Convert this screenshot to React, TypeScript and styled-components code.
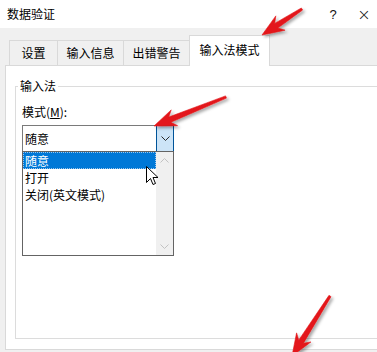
import React from "react";
import styled, { createGlobalStyle } from "styled-components";

const GlobalStyle = createGlobalStyle`
  html, body {
    margin: 0;
    padding: 0;
    background: #f0f0f0;
  }
  body {
    font-family: "Noto Sans CJK SC", "Microsoft YaHei", sans-serif;
    font-size: 12px;
    color: #000;
  }
`;

type Point = { x: number; y: number };

const ARROWS: { from: Point; to: Point }[] = [
  { from: { x: 302, y: 9 }, to: { x: 262, y: 35 } },
  { from: { x: 226, y: 97 }, to: { x: 154, y: 126 } },
  { from: { x: 330, y: 296 }, to: { x: 292, y: 356 } },
];

const TABS = [
  { label: "设置", width: 49 },
  { label: "输入信息", width: 67 },
  { label: "出错警告", width: 67 },
  { label: "输入法模式", width: 81 },
];
const OPTIONS = ["随意", "打开", "关闭(英文模式)"];

const arrowPoints = (from: Point, to: Point) => {
  const dx = to.x - from.x;
  const dy = to.y - from.y;
  const len = Math.hypot(dx, dy);
  const ux = dx / len;
  const uy = dy / len;
  const nx = -uy;
  const ny = ux;
  const head = 20;
  const half = 8.5;
  const bx = to.x - ux * head;
  const by = to.y - uy * head;
  const pts: [number, number][] = [
    [from.x + nx * 1.2, from.y + ny * 1.2],
    [bx + ux * 3 + nx * 2.8, by + uy * 3 + ny * 2.8],
    [bx - ux * 2 + nx * half, by - uy * 2 + ny * half],
    [to.x, to.y],
    [bx - ux * 2 - nx * half, by - uy * 2 - ny * half],
    [bx + ux * 3 - nx * 2.8, by + uy * 3 - ny * 2.8],
    [from.x - nx * 1.2, from.y - ny * 1.2],
  ];
  return pts.map((p) => p.join(",")).join(" ");
};

export default function App() {
  return (
    <>
      <GlobalStyle />
      <Window>
        <TitleBar>
          <Title>数据验证</Title>
          <HelpButton>?</HelpButton>
          <CloseButton>×</CloseButton>
        </TitleBar>

        <TabStrip>
          {TABS.map((t, i) => (
            <Tab key={t.label} $width={t.width} $active={i === TABS.length - 1}>
              {t.label}
            </Tab>
          ))}
        </TabStrip>

        <Panel>
          <GroupBox>
            <Legend>输入法</Legend>
            <FieldLabel>
              模式(<u>M</u>):
            </FieldLabel>
            <ComboWrap>
              <Combo>
                <ComboText>随意</ComboText>
                <DropButton>
                  <svg width="9" height="5" viewBox="0 0 9 5">
                    <path d="M0.5 0.5 L4.5 4.5 L8.5 0.5" fill="none" stroke="#2b2b2b" strokeWidth="1" />
                  </svg>
                </DropButton>
              </Combo>
              <DropList>
                <Options>
                  {OPTIONS.map((o, i) => (
                    <Option key={o} $selected={i === 0}>
                      {o}
                    </Option>
                  ))}
                </Options>
                <ScrollBar>
                  <ScrollArrow>
                    <svg width="9" height="5" viewBox="0 0 9 5">
                      <path d="M0.5 4.5 L4.5 0.5 L8.5 4.5" fill="none" stroke="#c2c2c2" strokeWidth="1" />
                    </svg>
                  </ScrollArrow>
                  <ScrollArrow>
                    <svg width="9" height="5" viewBox="0 0 9 5">
                      <path d="M0.5 0.5 L4.5 4.5 L8.5 0.5" fill="none" stroke="#c2c2c2" strokeWidth="1" />
                    </svg>
                  </ScrollArrow>
                </ScrollBar>
              </DropList>
            </ComboWrap>
          </GroupBox>
        </Panel>

        <Cursor width="13" height="20" viewBox="0 0 13 20">
          <path
            d="M0.5 0.5 L0.5 16.5 L4.5 12.5 L7 18.5 L9.5 17.5 L7 11.5 L12 11.5 Z"
            fill="#fff"
            stroke="#000"
            strokeWidth="1"
            strokeLinejoin="round"
          />
        </Cursor>

        <Annotations width="377" height="352" viewBox="0 0 377 352">
          <defs>
            <filter id="shadow" x="-20%" y="-20%" width="140%" height="140%">
              <feDropShadow dx="2" dy="2" stdDeviation="1.5" floodColor="#000" floodOpacity="0.35" />
            </filter>
          </defs>
          {ARROWS.map((a, i) => (
            <polygon
              key={i}
              points={arrowPoints(a.from, a.to)}
              fill="#e3151a"
              stroke="#e3151a"
              strokeWidth="0.6"
              strokeLinejoin="round"
              filter="url(#shadow)"
            />
          ))}
        </Annotations>
      </Window>
    </>
  );
}

const Window = styled.div`
  position: relative;
  width: 377px;
  height: 352px;
  overflow: hidden;
  background: #f0f0f0;
  display: flex;
  flex-direction: column;
`;

const TitleBar = styled.div`
  height: 28px;
  flex-shrink: 0;
  background: #fff;
  display: flex;
  align-items: center;
  padding-left: 7px;
  box-sizing: border-box;
`;

const Title = styled.div`
  flex: 1;
  font-size: 12px;
  line-height: 16px;
`;

const HelpButton = styled.div`
  width: 30px;
  text-align: center;
  font-family: "Liberation Sans", Arial, sans-serif;
  font-size: 13px;
  color: #111;
`;

const CloseButton = styled.div`
  width: 26px;
  margin-left: 3px;
  text-align: center;
  font-family: "DejaVu Sans", sans-serif;
  font-size: 16px;
  font-weight: 300;
  color: #111;
`;

const TabStrip = styled.div`
  height: 37px;
  flex-shrink: 0;
  display: flex;
  align-items: flex-end;
  padding-left: 10px;
  position: relative;
  z-index: 1;
`;

const Tab = styled.div<{ $active?: boolean; $width: number }>`
  box-sizing: border-box;
  width: ${(p) => p.$width}px;
  height: ${(p) => (p.$active ? "31px" : "25px")};
  margin-bottom: ${(p) => (p.$active ? "-1px" : "0")};
  padding-bottom: ${(p) => (p.$active ? "2px" : "0")};
  display: flex;
  align-items: center;
  justify-content: center;
  background: ${(p) => (p.$active ? "#fff" : "#f0f0f0")};
  border: 1px solid #d9d9d9;
  border-bottom: none;
  margin-left: -1px;
  font-size: 12px;
  line-height: 16px;
  white-space: nowrap;
`;

const Panel = styled.div`
  box-sizing: border-box;
  margin-left: 5px;
  width: 400px;
  height: 285px;
  flex-shrink: 0;
  background: #fff;
  border: 1px solid #d9d9d9;
  padding: 13px 0 10px 9px;
  display: flex;
  flex-direction: column;
`;

const GroupBox = styled.fieldset`
  flex: 1;
  margin: 0;
  min-width: 0;
  padding: 0 0 0 6px;
  border: 1px solid #dcdcdc;
`;

const Legend = styled.legend`
  margin-left: -4px;
  padding: 0 2px;
  font-size: 12px;
  line-height: 14px;
`;

const FieldLabel = styled.div`
  margin-top: 11px;
  font-size: 12px;
  line-height: 16px;
`;

const ComboWrap = styled.div`
  position: relative;
  width: 152px;
  margin-top: 5px;
`;

const Combo = styled.div`
  box-sizing: border-box;
  height: 27px;
  display: flex;
  align-items: stretch;
  border: 1px solid #7a7a7a;
  background: #fff;
`;

const ComboText = styled.div`
  flex: 1;
  display: flex;
  align-items: center;
  padding-left: 2px;
  font-size: 12px;
`;

const DropButton = styled.div`
  box-sizing: border-box;
  width: 18px;
  margin: -1px -1px -1px 0;
  display: flex;
  align-items: center;
  justify-content: center;
  background: #cce4f7;
  border: 1px solid #005499;
`;

const DropList = styled.div`
  position: absolute;
  top: 26px;
  left: 0;
  width: 152px;
  height: 105px;
  box-sizing: border-box;
  border: 1px solid #646464;
  background: #fff;
  display: flex;
`;

const Options = styled.div`
  flex: 1;
  display: flex;
  flex-direction: column;
`;

const Option = styled.div<{ $selected?: boolean }>`
  box-sizing: border-box;
  height: 17px;
  line-height: 15px;
  padding-left: 1px;
  font-size: 12px;
  white-space: nowrap;
  background: ${(p) => (p.$selected ? "#0078d7" : "transparent")};
  color: ${(p) => (p.$selected ? "#fff" : "#000")};
  border: 1px ${(p) => (p.$selected ? "dotted #9cc6ea" : "solid transparent")};
`;

const ScrollBar = styled.div`
  width: 17px;
  background: #f0f0f0;
  display: flex;
  flex-direction: column;
  justify-content: space-between;
`;

const ScrollArrow = styled.div`
  height: 17px;
  display: flex;
  align-items: center;
  justify-content: center;
`;

const Cursor = styled.svg`
  position: absolute;
  left: 146px;
  top: 166px;
  z-index: 3;
`;

const Annotations = styled.svg`
  position: absolute;
  left: 0;
  top: 0;
  z-index: 4;
  pointer-events: none;
`;
